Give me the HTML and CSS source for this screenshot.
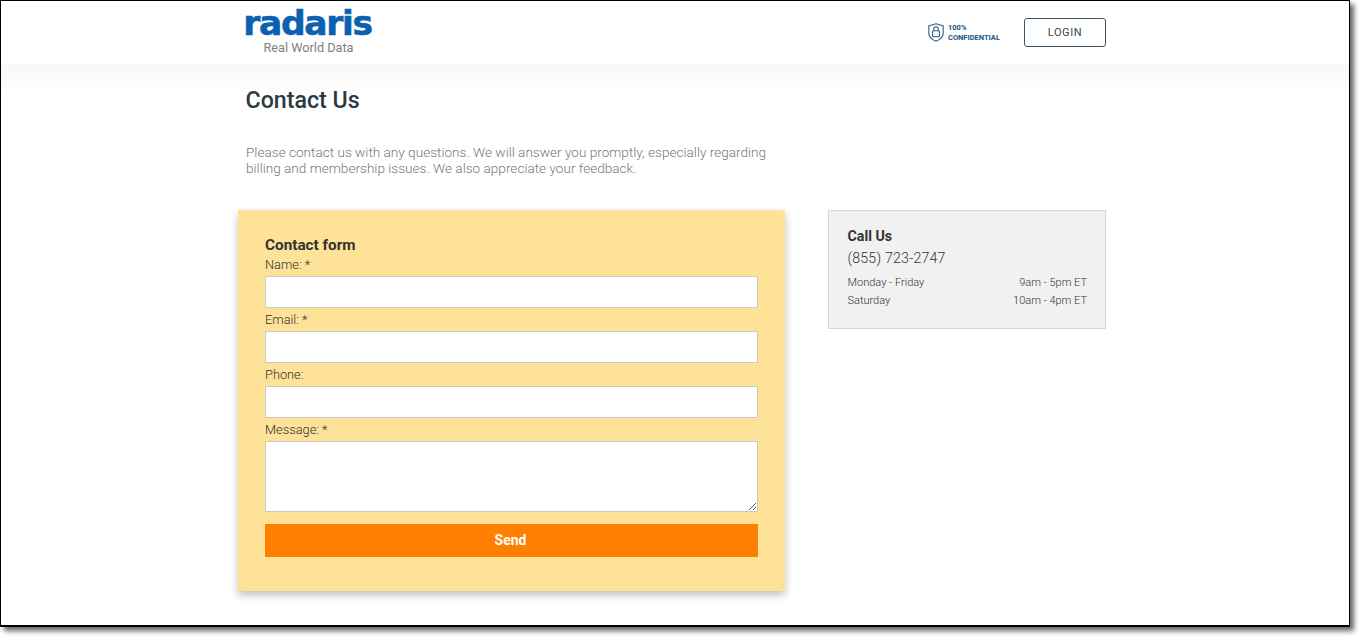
FILE: index.html
```html
<!DOCTYPE html>
<html lang="en">
<head>
    <meta charset="UTF-8">
    <meta name="viewport" content="width=device-width, initial-scale=1.0">
    <title>Contact Us</title>
    <link rel="stylesheet" href="styles.css">
</head>
<body>
    <div class="window">
        <!-- Header -->
        <header class="header">
            <div class="header-inner">
                <a class="logo" href="#">
                    <span class="logo-word">radaris</span>
                    <span class="logo-sub">Real World Data</span>
                </a>
                <div class="header-right">
                    <div class="secure">
                        <svg class="secure-icon" width="16" height="19" viewBox="0 0 16 19" fill="none" stroke="#2f5f80" stroke-width="1.1">
                            <path d="M8 .8 15.2 3v7c0 4-3 6.600-7.200 8.200C3.800 16.600.8 14 .8 10V3z"/>
                            <rect x="4.500" y="7.800" width="7" height="6" rx="1"/>
                            <path d="M5.800 7.800V6a2.200 2.200 0 0 1 4.400 0v1.800"/>
                        </svg>
                        <div class="secure-text">100%<br>CONFIDENTIAL</div>
                    </div>
                    <a class="login" href="#">LOGIN</a>
                </div>
            </div>
        </header>
        <div class="band"></div>

        <main class="content">
            <h1 class="title">Contact Us</h1>
            <p class="intro">Please contact us with any questions. We will answer you promptly, especially regarding billing and membership issues. We also appreciate your feedback.</p>

            <div class="columns">
                <form class="contact-form">
                    <h2 class="form-title">Contact form</h2>
                    <label for="name">Name: *</label>
                    <input type="text" id="name">
                    <label for="email">Email: *</label>
                    <input type="text" id="email">
                    <label for="phone">Phone:</label>
                    <input type="text" id="phone">
                    <label for="message">Message: *</label>
                    <textarea id="message"></textarea>
                    <button type="button" class="send">Send</button>
                </form>

                <aside class="call">
                    <div class="call-title">Call Us</div>
                    <div class="call-phone">(855) 723-2747</div>
                    <div class="call-row"><span>Monday - Friday</span><span>9am - 5pm ET</span></div>
                    <div class="call-row"><span>Saturday</span><span>10am - 4pm ET</span></div>
                </aside>
            </div>
        </main>
    </div>
</body>
</html>
```

FILE: styles.css
```css
html, body {
    margin: 0;
    padding: 0;
    height: 100%;
    background: #fff;
}

body {
    font-family: Roboto, "Liberation Sans", sans-serif;
    color: #333;
}

.window {
    box-sizing: border-box;
    width: 1350px;
    height: 627px;
    border: 1px solid #000;
    border-bottom-width: 2px;
    background: #fff;
    box-shadow: 4px 4px 5px rgba(0, 0, 0, 0.6);
    overflow: hidden;
}

/* Header */
.header {
    height: 63px;
}

.header-inner {
    display: flex;
    justify-content: space-between;
    align-items: flex-start;
    width: 861px;
    margin-left: 244px;
}

.logo {
    display: flex;
    flex-direction: column;
    align-items: center;
    width: 127px;
    text-decoration: none;
}

.logo-word {
    margin: 4px 0 0 -2px;
    height: 36px;
    font-family: "DejaVu Sans", sans-serif;
    font-weight: 700;
    font-size: 34.500px;
    line-height: 36px;
    letter-spacing: -1.300px;
    color: #0b60b0;
    -webkit-text-stroke: 0.6px #0b60b0;
}

.logo-sub {
    font-size: 12.700px;
    line-height: 14px;
    color: #808080;
}

.header-right {
    display: flex;
    align-items: center;
    margin-top: 17px;
}

.secure {
    display: flex;
    align-items: center;
    margin-right: 23px;
}

.secure-icon {
    margin-right: 4px;
}

.secure-text {
    width: 53px;
    font-size: 7.500px;
    line-height: 10px;
    font-weight: 700;
    color: #23527c;
}

.login {
    box-sizing: border-box;
    width: 82px;
    height: 29px;
    border: 1px solid #3d5566;
    border-radius: 3px;
    font-size: 11px;
    font-weight: 400;
    line-height: 27px;
    letter-spacing: 0.6px;
    text-align: center;
    text-decoration: none;
    color: #444;
}

.band {
    height: 31px;
    background: linear-gradient(#f7f7f7, #fff);
}

/* Content */
.content {
    width: 868px;
    margin-left: 237px;
}

.title {
    margin: -9px 0 0 7.500px;
    font-size: 23.200px;
    line-height: 28px;
    font-weight: 500;
    color: #2b3a42;
}

.intro {
    width: 530px;
    margin: 30px 0 0 8px;
    font-size: 13.600px;
    font-weight: 300;
    line-height: 16px;
    color: #777;
}

.columns {
    display: flex;
    justify-content: space-between;
    align-items: flex-start;
    margin-top: 34px;
}

/* Contact form */
.contact-form {
    display: flex;
    flex-direction: column;
    box-sizing: border-box;
    width: 547px;
    height: 381px;
    padding: 26px 27px 0;
    background: #fde298;
    box-shadow: 0 4px 8px rgba(0, 0, 0, 0.25);
}

.form-title {
    margin: 0 0 -1px;
    font-size: 15.300px;
    line-height: 18px;
    font-weight: 700;
    color: #333;
}

.contact-form label {
    height: 23px;
    font-size: 12.800px;
    font-weight: 300;
    line-height: 23px;
    color: #333;
}

.contact-form input,
.contact-form textarea {
    box-sizing: border-box;
    flex: none;
    width: 493px;
    height: 32px;
    margin: 0;
    padding: 4px;
    border: 1px solid #c9c9c9;
    background: #fff;
    font: 13px Roboto, sans-serif;
}

.contact-form textarea {
    height: 71px;
}

.send {
    height: 33px;
    margin-top: 12px;
    padding: 0 2px 2px 0;
    border: 0;
    background: #ff8000;
    color: #fff;
    font-family: Roboto, sans-serif;
    font-size: 14px;
    font-weight: 700;
}

/* Call box */
.call {
    box-sizing: border-box;
    width: 278px;
    height: 119px;
    padding: 17px 18px 0 18.500px;
    border: 1px solid #d8d8d8;
    background: #f1f1f1;
}

.call-title {
    font-size: 14.200px;
    font-weight: 700;
    line-height: 16px;
    color: #333;
}

.call-phone {
    margin: 5px 0 6px;
    font-size: 14.200px;
    font-weight: 300;
    line-height: 19px;
    letter-spacing: 0.2px;
    color: #333;
}

.call-row {
    display: flex;
    justify-content: space-between;
    font-size: 11px;
    font-weight: 300;
    line-height: 18px;
    color: #333;
}
```
